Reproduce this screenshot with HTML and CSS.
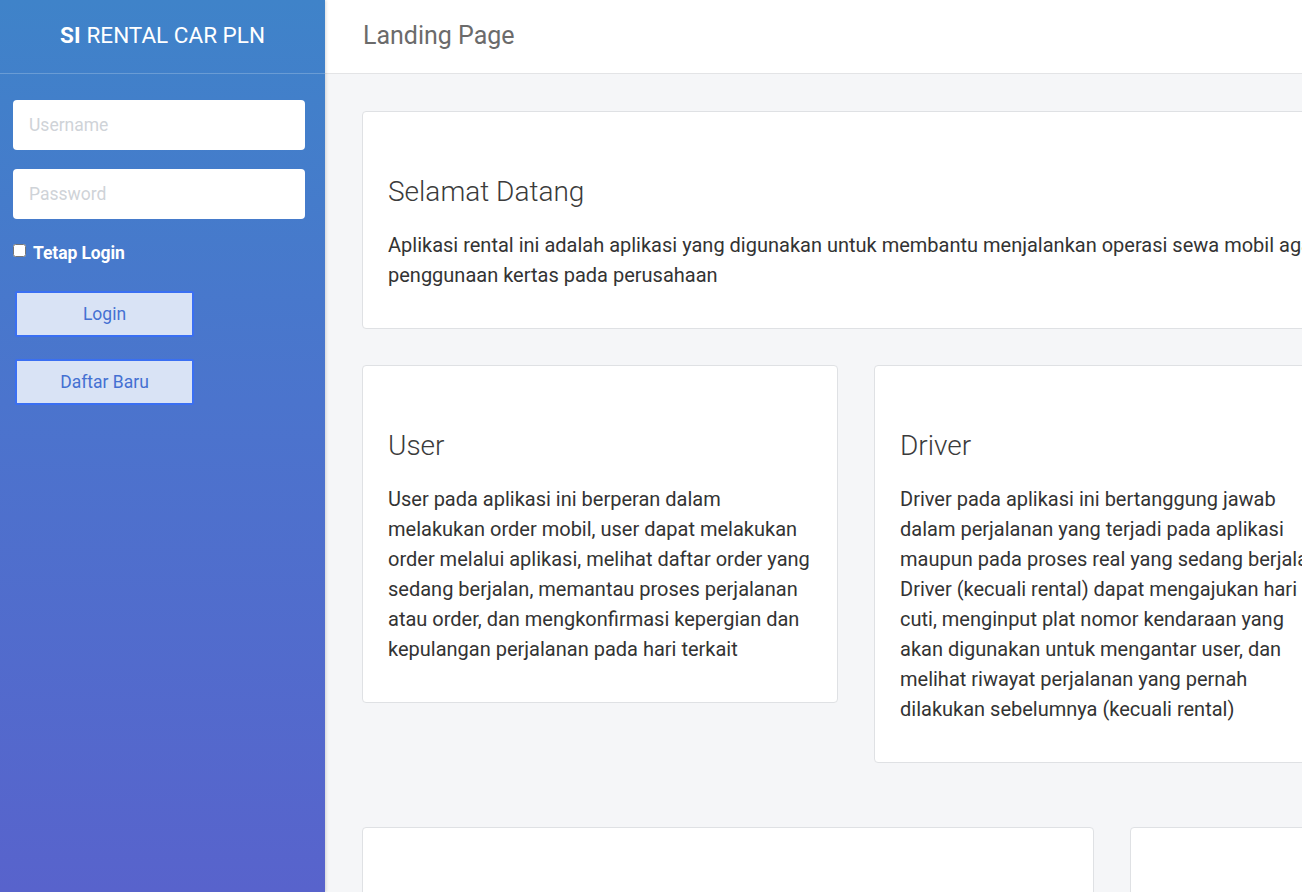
FILE: index.html
```html
<!DOCTYPE html>
<html lang="id">
<head>
<meta charset="utf-8">
<title>SI Rental Car PLN</title>
<link rel="stylesheet" href="styles.css">
</head>
<body>
<div class="app">
  <aside class="sidebar">
    <div class="brand"><b>SI</b> RENTAL CAR PLN</div>
    <form class="login">
      <input class="field" type="text" placeholder="Username">
      <input class="field" type="password" placeholder="Password">
      <label class="remember"><input type="checkbox" class="check"> Tetap Login</label>
      <button type="button" class="btn">Login</button>
      <button type="button" class="btn">Daftar Baru</button>
    </form>
  </aside>
  <main class="main">
    <header class="topbar"><h1 class="page-title">Landing Page</h1></header>
    <section class="content">
      <div class="row">
        <div class="card card-full">
          <h2 class="card-title">Selamat Datang</h2>
          <p class="card-text">Aplikasi rental ini adalah aplikasi yang digunakan untuk membantu menjalankan operasi sewa mobil agar dapat meminimalisir<br>penggunaan kertas pada perusahaan</p>
        </div>
      </div>
      <div class="row row-3">
        <div class="card">
          <h2 class="card-title">User</h2>
          <p class="card-text">User pada aplikasi ini berperan dalam melakukan order mobil, user dapat melakukan order melalui aplikasi, melihat daftar order yang sedang berjalan, memantau proses perjalanan atau order, dan mengkonfirmasi kepergian dan kepulangan perjalanan pada hari terkait</p>
        </div>
        <div class="card">
          <h2 class="card-title">Driver</h2>
          <p class="card-text">Driver pada aplikasi ini bertanggung jawab<br>dalam perjalanan yang terjadi pada aplikasi<br>maupun pada proses real yang sedang berjalan.<br>Driver (kecuali rental) dapat mengajukan hari<br>cuti, menginput plat nomor kendaraan yang<br>akan digunakan untuk mengantar user, dan<br>melihat riwayat perjalanan yang pernah<br>dilakukan sebelumnya (kecuali rental)</p>
        </div>
        <div class="card">
          <h2 class="card-title">Admin</h2>
          <p class="card-text">Admin pada aplikasi ini berperan dalam mengelola data user, driver, kendaraan dan order yang ada pada aplikasi</p>
        </div>
      </div>
      <div class="row row-2">
        <div class="card">
          <h2 class="card-title">Rental</h2>
          <p class="card-text">Rental pada aplikasi ini berperan dalam menyediakan kendaraan dan driver</p>
        </div>
        <div class="card">
          <h2 class="card-title">Approval</h2>
          <p class="card-text">Approval pada aplikasi ini berperan dalam menyetujui order</p>
        </div>
      </div>
    </section>
  </main>
</div>
</body>
</html>
```

FILE: styles.css
```css
* { box-sizing: border-box; }
html, body {
  margin: 0;
  height: 100%;
  overflow: hidden;
}
body {
  font-family: Roboto, "Liberation Sans", Arial, sans-serif;
  background: #f5f6f8;
}
.app {
  display: flex;
  height: 892px;
}
.sidebar {
  flex: 0 0 325px;
  width: 325px;
  background: linear-gradient(180deg, #3f83c9 0%, #4b74cd 45%, #5863cc 100%);
  box-shadow: 1px 0 3px rgba(0,0,0,0.15);
  position: relative;
  z-index: 1;
}
.brand {
  height: 74px;
  border-bottom: 1px solid rgba(255,255,255,0.22);
  color: #fff;
  font-size: 22.5px;
  display: flex;
  align-items: center;
  justify-content: center;
  padding-bottom: 3px;
}
.brand b { font-weight: 700; margin-right: 6px; }
.login {
  display: flex;
  flex-direction: column;
  align-items: flex-start;
  padding: 26px 20px 0 13px;
}
.field {
  width: 100%;
  height: 50px;
  border: none;
  border-radius: 4px;
  background: #fff;
  padding: 0 16px;
  font-family: Roboto, "Liberation Sans", sans-serif;
  font-size: 17.5px;
  color: #333;
  margin-bottom: 19px;
}
.field::placeholder { color: #cfd3d8; }
.remember {
  display: flex;
  align-items: center;
  color: #fff;
  font-weight: 700;
  font-size: 17.5px;
  margin-top: 5px;
  letter-spacing: -0.1px;
}
.check {
  width: 13px;
  height: 13px;
  margin: -6px 7px 0 0;
}
.btn {
  width: 179px;
  height: 46px;
  margin: 28px 0 0 2px;
  background: #d9e3f5;
  border: 2px solid #3a6ff2;
  border-radius: 2px;
  color: #4470d2;
  font-family: Roboto, "Liberation Sans", sans-serif;
  font-size: 17.5px;
}
.btn + .btn { margin-top: 22px; }
.main {
  flex: 1;
  min-width: 0;
  display: flex;
  flex-direction: column;
  overflow: hidden;
}
.topbar {
  height: 74px;
  flex: 0 0 74px;
  background: #fff;
  border-bottom: 1px solid #e3e4e6;
  display: flex;
  align-items: center;
  padding-left: 38px;
  padding-bottom: 2px;
}
.page-title {
  margin: 0;
  font-weight: 400;
  font-size: 25px;
  color: #6b6b6b;
}
.content {
  width: 1610px;
  padding: 37px 37px 0 37px;
  display: flex;
  flex-direction: column;
  flex-shrink: 0;
}
.row {
  display: grid;
  gap: 36px;
  align-items: start;
}
.row-3 {
  grid-template-columns: 476px 510px 476px;
  margin-top: 36px;
}
.row-2 {
  grid-template-columns: repeat(2, 732px);
  margin-top: 64px;
}
.card {
  background: #fff;
  border: 1px solid #dfe1e4;
  border-radius: 4px;
  padding: 62px 25px 38px;
}
.card-title {
  margin: 0 0 20px;
  font-weight: 300;
  font-size: 28px;
  line-height: 36px;
  color: #3b3b3b;
}
.card-text {
  margin: 0;
  font-size: 20px;
  line-height: 30px;
  color: #333;
}
```
